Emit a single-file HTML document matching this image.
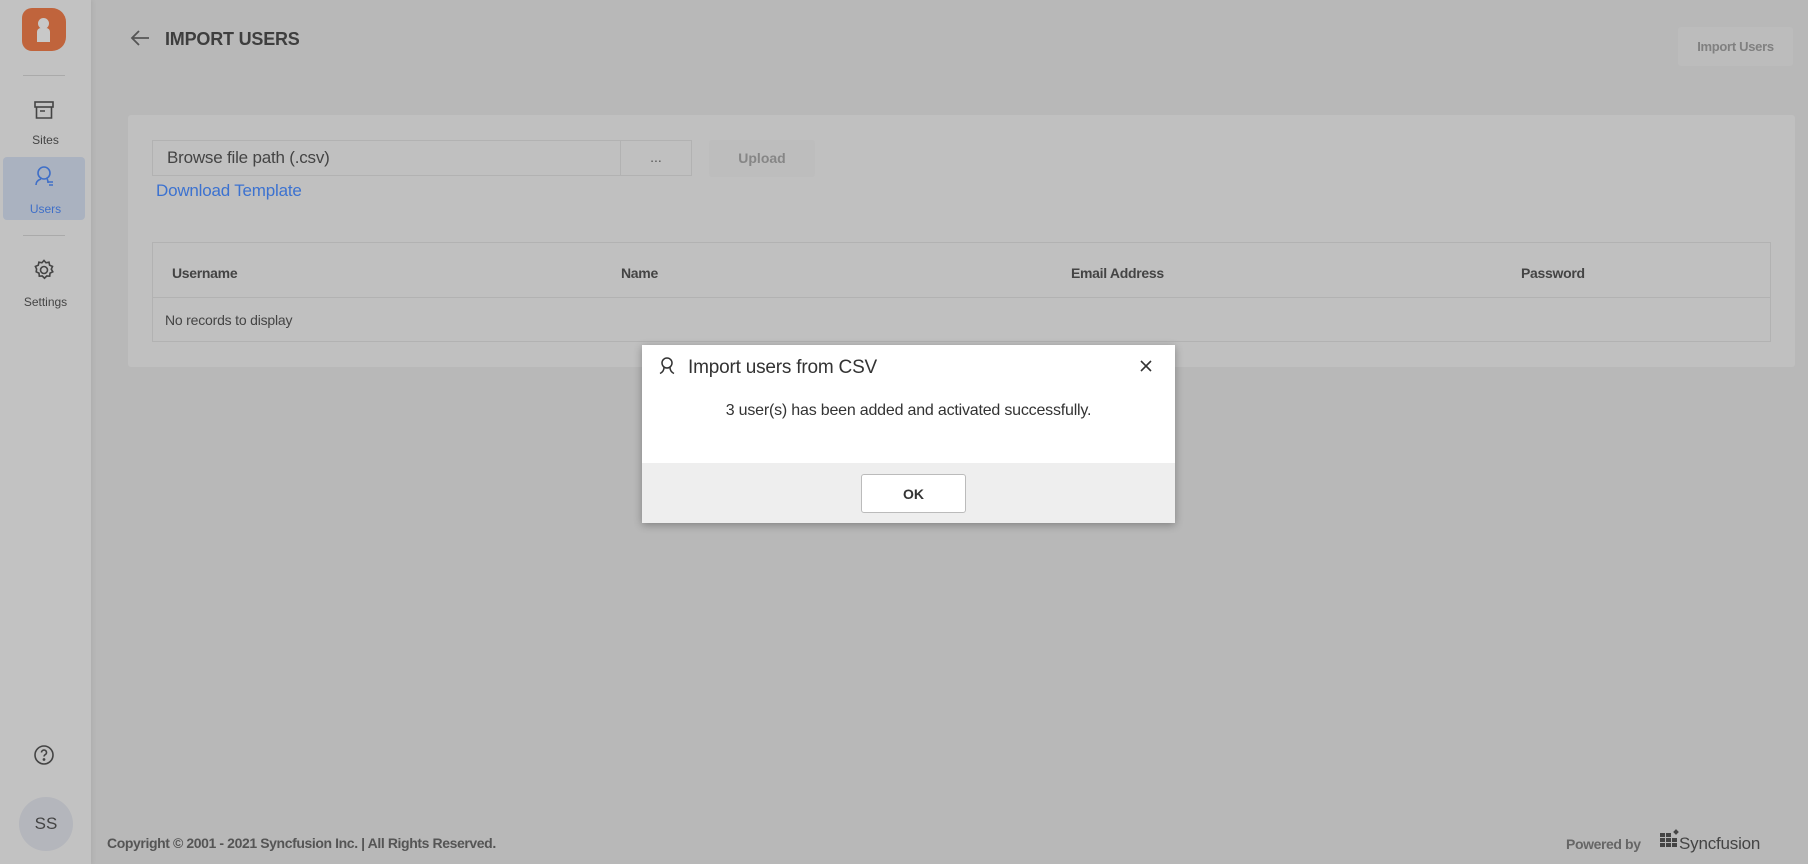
<!DOCTYPE html>
<html><head><meta charset="utf-8"><style>
*{box-sizing:border-box;margin:0;padding:0}
body{width:1808px;height:864px;overflow:hidden;background:#b8b8b8;font-family:"Liberation Sans",sans-serif;position:relative;color:#3a3a3a}
.abs{position:absolute}
.sb{left:0;top:0;width:91px;height:864px;background:#c2c2c2;box-shadow:2px 0 4px rgba(0,0,0,.06)}
.lbl{width:91px;text-align:center;font-size:12px;color:#444}
.sep{left:23px;width:42px;height:1px;background:#aaa}
.card{left:128px;top:115px;width:1667px;height:252px;background:#c0c0c0;border-radius:3px}
.dlg{left:642px;top:345px;width:533px;height:178px;background:#fff;box-shadow:0 2px 8px rgba(0,0,0,.3)}
</style></head><body>
<div class="abs sb"></div>
<div class="abs" style="left:22px;top:8px;width:44px;height:43px;background:#c0643c;border-radius:10px 14px 14px 10px"></div>
<div class="abs" style="left:38px;top:18px;width:11px;height:11px;border-radius:50%;background:#c8c8c8"></div>
<div class="abs" style="left:37px;top:28px;width:13px;height:14px;background:#c8c8c8;border-radius:4px 4px 0 0"></div>
<div class="abs sep" style="top:75px"></div>
<svg class="abs" style="left:33px;top:99px" width="22" height="22" viewBox="0 0 22 22" fill="none" stroke="#444" stroke-width="1.6"><rect x="2" y="3" width="18" height="5"/><path d="M3.5 8v11h15V8M7 12h5"/></svg>
<div class="abs lbl" style="top:133px">Sites</div>
<div class="abs" style="left:3px;top:157px;width:82px;height:63px;background:#aab2c0;border-radius:4px"></div>
<svg class="abs" style="left:33px;top:165px" width="24" height="24" viewBox="0 0 24 24" fill="none" stroke="#3f6fc8" stroke-width="1.6"><circle cx="11" cy="8" r="6"/><path d="M3 20c0-3 2-5 5-6M14 14c1 1 1 2 1 4M15 17h5M16 20h4"/></svg>
<div class="abs lbl" style="top:202px;color:#3f6fc8">Users</div>
<div class="abs sep" style="top:235px"></div>
<svg class="abs" style="left:32px;top:258px" width="24" height="24" viewBox="0 0 24 24" fill="none" stroke="#444" stroke-width="1.6"><circle cx="12" cy="12" r="3.5"/><path d="M12 2.5l2 2.3 3-.6.6 3 2.9 1.2-1.2 2.8 1.5 2.6-2.8 1.4-.3 3-3-.2-2.2 2.2-2.2-2.2-3 .2-.3-3-2.8-1.4L4.6 11 3.4 8.4l2.9-1.2.6-3 3 .6z"/></svg>
<div class="abs lbl" style="top:295px">Settings</div>
<svg class="abs" style="left:33px;top:744px" width="22" height="22" viewBox="0 0 22 22" fill="none" stroke="#444" stroke-width="1.6"><circle cx="11" cy="11" r="9"/><path d="M8.5 8.5a2.5 2.5 0 1 1 3.5 2.3c-.7.4-1 .8-1 1.7"/><circle cx="11" cy="15.5" r=".6" fill="#444"/></svg>
<div class="abs" style="left:19px;top:797px;width:54px;height:54px;border-radius:50%;background:#b4b6bc;text-align:center;line-height:54px;font-size:17px;color:#444">SS</div>

<svg class="abs" style="left:129px;top:28px" width="22" height="20" viewBox="0 0 22 20" fill="none" stroke="#555" stroke-width="1.8"><path d="M20 10H3M10 3l-7 7 7 7"/></svg>
<div class="abs" style="left:165px;top:29px;font-size:18px;font-weight:bold;color:#3e3e3e;letter-spacing:-0.2px">IMPORT USERS</div>
<div class="abs" style="left:1678px;top:27px;width:115px;height:39px;background:#bcbcbc;border-radius:3px;text-align:center;line-height:39px;font-size:13px;color:#808080;font-weight:bold;letter-spacing:-0.3px">Import Users</div>

<div class="abs card"></div>
<div class="abs" style="left:152px;top:140px;width:469px;height:36px;border:1px solid #b2b2b2;font-size:17px;line-height:34px;padding-left:14px;color:#444;letter-spacing:-0.2px">Browse file path (.csv)</div>
<div class="abs" style="left:621px;top:140px;width:71px;height:36px;border:1px solid #b2b2b2;border-left:none;text-align:center;line-height:32px;font-size:14px;color:#555">...</div>
<div class="abs" style="left:709px;top:140px;width:106px;height:37px;background:#bdbdbd;border-radius:3px;text-align:center;line-height:37px;font-size:14px;font-weight:bold;color:#868686">Upload</div>
<div class="abs" style="left:156px;top:181px;font-size:17px;color:#3c72d0;letter-spacing:-0.2px">Download Template</div>
<div class="abs" style="left:152px;top:242px;width:1619px;height:100px;border:1px solid #b2b2b2"></div>
<div class="abs" style="left:153px;top:297px;width:1617px;height:1px;background:#b2b2b2"></div>
<div class="abs" style="top:265px;left:172px;font-size:14px;font-weight:bold;color:#444;letter-spacing:-0.3px">Username</div>
<div class="abs" style="top:265px;left:621px;font-size:14px;font-weight:bold;color:#444;letter-spacing:-0.3px">Name</div>
<div class="abs" style="top:265px;left:1071px;font-size:14px;font-weight:bold;color:#444;letter-spacing:-0.3px">Email Address</div>
<div class="abs" style="top:265px;left:1521px;font-size:14px;font-weight:bold;color:#444;letter-spacing:-0.3px">Password</div>
<div class="abs" style="top:312px;left:165px;font-size:14px;color:#444;letter-spacing:-0.2px">No records to display</div>

<div class="abs" style="left:107px;top:835px;font-size:14px;font-weight:bold;color:#555;letter-spacing:-0.4px">Copyright © 2001 - 2021 Syncfusion Inc. | All Rights Reserved.</div>
<div class="abs" style="left:1566px;top:836px;font-size:14px;font-weight:bold;color:#666;letter-spacing:-0.4px">Powered by</div>
<svg class="abs" style="left:1660px;top:829px" width="22" height="20" viewBox="0 0 22 20" fill="#444"><rect x="0" y="4" width="5" height="4"/><rect x="6" y="4" width="5" height="4"/><rect x="0" y="9" width="5" height="4"/><rect x="6" y="9" width="5" height="4"/><rect x="12" y="9" width="5" height="4"/><rect x="0" y="14" width="5" height="4"/><rect x="6" y="14" width="5" height="4"/><rect x="12" y="14" width="5" height="4"/><rect x="14" y="1" width="4" height="4" transform="rotate(45 16 3)"/></svg>
<div class="abs" style="left:1679px;top:834px;font-size:17px;color:#444;letter-spacing:-0.2px">Syncfusion</div>

<div class="abs dlg"></div>
<svg class="abs" style="left:657px;top:356px" width="20" height="20" viewBox="0 0 20 20" fill="none" stroke="#333" stroke-width="1.5"><circle cx="10" cy="7" r="5"/><path d="M7 11.5c0 3-2 5-4 6M13 11.5c0 3 2 5 4 6"/></svg>
<div class="abs" style="left:688px;top:357px;font-size:19px;color:#333;letter-spacing:-0.2px">Import users from CSV</div>
<svg class="abs" style="left:1139px;top:359px" width="14" height="14" viewBox="0 0 14 14" stroke="#333" stroke-width="1.6"><path d="M2 2l10 10M12 2L2 12"/></svg>
<div class="abs" style="left:642px;top:402px;width:533px;text-align:center;font-size:16px;color:#333;letter-spacing:-0.2px">3 user(s) has been added and activated successfully.</div>
<div class="abs" style="left:642px;top:463px;width:533px;height:60px;background:#eeeeee"></div>
<div class="abs" style="left:861px;top:474px;width:105px;height:39px;background:#fff;border:1px solid #bbb;border-radius:3px;text-align:center;line-height:38px;font-size:14px;font-weight:bold;color:#333">OK</div>
</body></html>
